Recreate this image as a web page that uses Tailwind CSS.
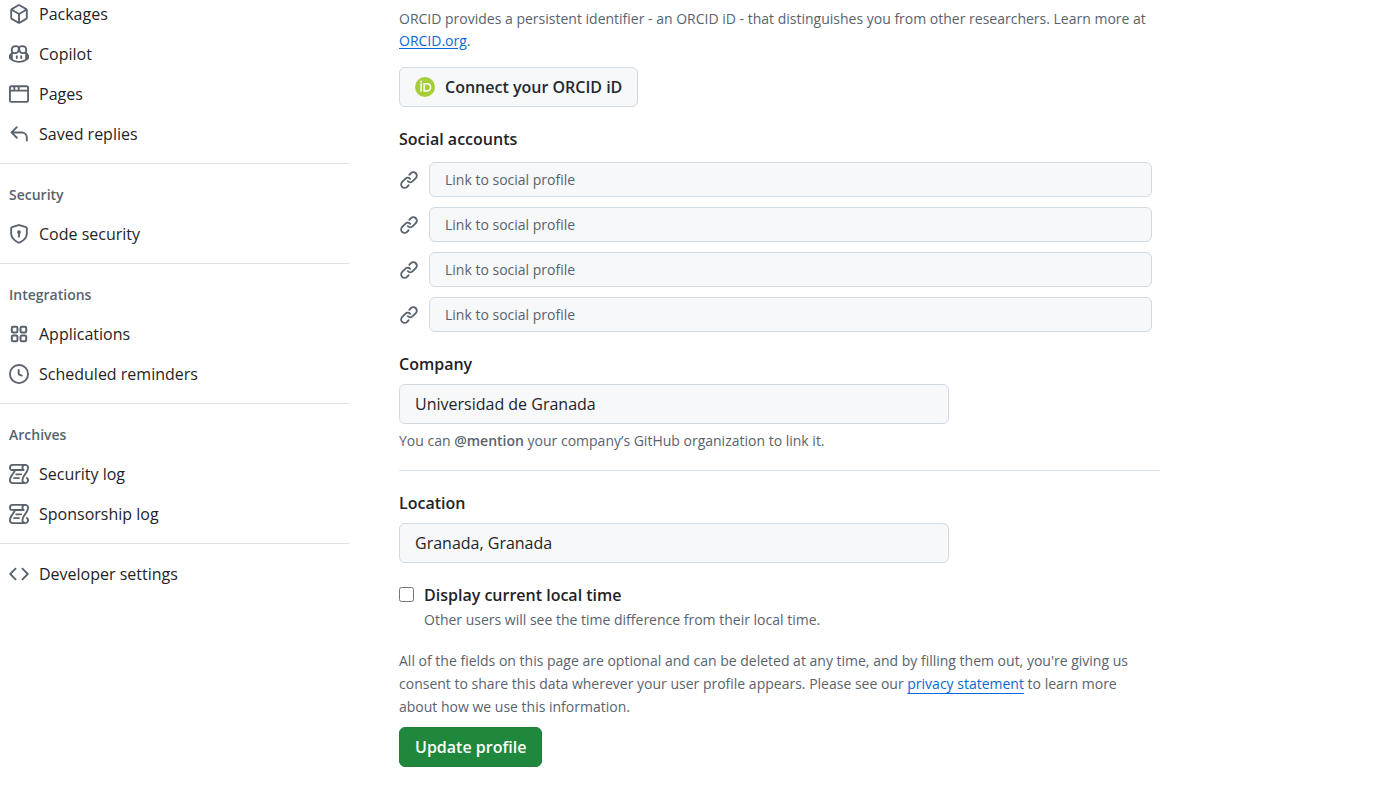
<!DOCTYPE html>
<html lang="en">
<head>
<meta charset="utf-8">
<meta name="viewport" content="width=device-width, initial-scale=1">
<title>Public profile</title>
<script src="https://cdn.jsdelivr.net/npm/@tailwindcss/browser@4"></script>
</head>
<body class="bg-white font-['Open_Sans','Noto_Sans',sans-serif] text-base text-[#1f2328]">
<svg class="hidden" aria-hidden="true">
  <symbol id="package" viewBox="0 0 16 16"><path d="m8.878.392 5.25 3.045c.54.314.872.89.872 1.514v6.098a1.75 1.75 0 0 1-.872 1.514l-5.25 3.045a1.75 1.75 0 0 1-1.756 0l-5.25-3.045A1.75 1.75 0 0 1 1 11.049V4.951c0-.624.332-1.201.872-1.514L7.122.392a1.75 1.75 0 0 1 1.756 0ZM7.875 1.69l-4.63 2.685L8 7.133l4.755-2.758-4.63-2.685a.248.248 0 0 0-.25 0ZM2.5 5.677v5.372c0 .09.047.171.125.216l4.625 2.683V8.432Zm6.25 8.271 4.625-2.683a.25.25 0 0 0 .125-.216V5.677L8.75 8.432Z"/></symbol>
  <symbol id="copilot" viewBox="0 0 16 16"><path d="M7.998 15.035c-4.562 0-7.873-2.914-7.998-3.749V9.338c.085-.628.677-1.686 1.588-2.065.013-.07.024-.143.036-.218.029-.183.06-.384.126-.612-.201-.508-.254-1.084-.254-1.656 0-.87.128-1.769.693-2.484.579-.733 1.494-1.124 2.724-1.261 1.206-.134 2.262.034 2.944.765.05.053.096.108.139.165.044-.057.094-.112.143-.165.682-.731 1.738-.899 2.944-.765 1.23.137 2.145.528 2.724 1.261.566.715.693 1.614.693 2.484 0 .572-.053 1.148-.254 1.656.066.228.098.429.126.612.012.076.024.148.037.218.924.385 1.522 1.471 1.591 2.095v1.872c0 .766-3.351 3.795-8.002 3.795Zm0-1.485c2.28 0 4.584-1.11 5.002-1.433V7.862l-.023-.116c-.49.21-1.075.291-1.727.291-1.146 0-2.059-.327-2.71-.991A3.222 3.222 0 0 1 8 6.303a3.24 3.24 0 0 1-.544.743c-.65.664-1.563.991-2.71.991-.652 0-1.236-.081-1.727-.291l-.023.116v4.255c.419.323 2.722 1.433 5.002 1.433ZM6.762 2.83c-.193-.206-.637-.413-1.682-.297-1.019.113-1.479.404-1.713.7-.247.312-.369.789-.369 1.554 0 .793.129 1.171.308 1.371.162.181.519.379 1.442.379.853 0 1.339-.235 1.638-.54.315-.322.527-.827.617-1.553.117-.935-.037-1.395-.241-1.614Zm4.155-.297c-1.044-.116-1.488.091-1.681.297-.204.219-.359.679-.242 1.614.091.726.303 1.231.618 1.553.299.305.784.54 1.638.54.922 0 1.28-.198 1.442-.379.179-.2.308-.578.308-1.371 0-.765-.123-1.242-.37-1.554-.233-.296-.693-.587-1.713-.7Z"/><path d="M6.25 9.037a.75.75 0 0 1 .75.75v1.501a.75.75 0 0 1-1.5 0V9.787a.75.75 0 0 1 .75-.75Zm4.25.75v1.501a.75.75 0 0 1-1.5 0V9.787a.75.75 0 0 1 1.5 0Z"/></symbol>
  <symbol id="browser" viewBox="0 0 16 16"><path d="M0 2.75C0 1.784.784 1 1.75 1h12.5c.966 0 1.75.784 1.75 1.75v10.5A1.75 1.75 0 0 1 14.25 15H1.75A1.75 1.75 0 0 1 0 13.25ZM14.5 6h-13v7.25c0 .138.112.25.25.25h12.5a.25.25 0 0 0 .25-.25Zm-6-3.5v2h6V2.75a.25.25 0 0 0-.25-.25ZM5 2.5v2h2v-2Zm-3.25 0a.25.25 0 0 0-.25.25V4.5h2v-2Z"/></symbol>
  <symbol id="reply" viewBox="0 0 16 16"><path d="M6.78 1.97a.75.75 0 0 1 0 1.06L3.81 6h6.44A4.75 4.75 0 0 1 15 10.75v2.5a.75.75 0 0 1-1.5 0v-2.5a3.25 3.25 0 0 0-3.25-3.25H3.81l2.97 2.97a.749.749 0 0 1-.326 1.275.749.749 0 0 1-.734-.215L1.47 7.28a.75.75 0 0 1 0-1.06l4.25-4.25a.75.75 0 0 1 1.06 0Z"/></symbol>
  <symbol id="shield" viewBox="0 0 16 16"><path d="m8.533.133 5.25 1.68A1.75 1.75 0 0 1 15 3.48V7c0 1.566-.32 3.182-1.303 4.682-.983 1.498-2.585 2.813-5.032 3.855a1.697 1.697 0 0 1-1.33 0c-2.447-1.042-4.049-2.357-5.032-3.855C1.32 10.182 1 8.566 1 7V3.48a1.75 1.75 0 0 1 1.217-1.667l5.25-1.68a1.748 1.748 0 0 1 1.066 0Zm-.61 1.429.001.001-5.25 1.68a.251.251 0 0 0-.174.237V7c0 1.36.275 2.666 1.057 3.859.784 1.194 2.121 2.342 4.366 3.298a.196.196 0 0 0 .154 0c2.245-.957 3.582-2.103 4.366-3.297C13.225 9.666 13.5 8.358 13.5 7V3.48a.25.25 0 0 0-.174-.238l-5.25-1.68a.25.25 0 0 0-.153 0ZM9.5 6.5c0 .536-.287 1.032-.75 1.3v2.45a.75.75 0 0 1-1.5 0V7.8A1.5 1.5 0 1 1 9.5 6.5Z"/></symbol>
  <symbol id="apps" viewBox="0 0 16 16"><g fill="none" stroke="currentColor" stroke-width="1.6"><rect x="2.25" y="2.25" width="4.5" height="4.5" rx="1"/><rect x="9.25" y="2.25" width="4.5" height="4.5" rx="1"/><rect x="2.25" y="9.25" width="4.5" height="4.5" rx="1"/><rect x="9.25" y="9.25" width="4.5" height="4.5" rx="1"/></g></symbol>
  <symbol id="clock" viewBox="0 0 16 16"><path d="M8 0a8 8 0 1 1 0 16A8 8 0 0 1 8 0ZM1.5 8a6.5 6.5 0 1 0 13 0 6.5 6.5 0 0 0-13 0Zm7-3.25v2.992l2.028.812a.75.75 0 0 1-.557 1.392l-2.5-1A.751.751 0 0 1 7 8.25v-3.5a.75.75 0 0 1 1.5 0Z"/></symbol>
  <symbol id="log" viewBox="0 0 16 16"><path d="M5 8.25a.75.75 0 0 1 .75-.75h4a.75.75 0 0 1 0 1.5h-4A.75.75 0 0 1 5 8.25ZM4 10.5A.75.75 0 0 0 4 12h4a.75.75 0 0 0 0-1.5H4Z"/><path d="M13-.005c1.654 0 3 1.328 3 3 0 .982-.338 1.933-.783 2.818-.443.879-1.028 1.758-1.582 2.588l-.011.017c-.568.853-1.104 1.659-1.501 2.446-.398.789-.623 1.494-.623 2.136a1.5 1.5 0 1 0 2.333-1.248.75.75 0 0 1 .834-1.246A3 3 0 0 1 13 16H3a3 3 0 0 1-3-3c0-1.582.891-3.135 1.777-4.506.209-.322.418-.637.623-.946.473-.709.923-1.386 1.287-2.048H2.51c-.576 0-1.381-.133-1.907-.783A2.68 2.68 0 0 1 0 2.995a3 3 0 0 1 3-3Zm0 1.5a1.5 1.5 0 0 0-1.5 1.5c0 .476.223.834.667 1.132A.75.75 0 0 1 11.75 5.5H5.368c-.467 1.003-1.141 2.015-1.773 2.963-.192.289-.381.571-.558.845C2.13 10.711 1.5 11.916 1.5 13A1.5 1.5 0 0 0 3 14.5h7.401A2.989 2.989 0 0 1 10 13c0-.979.338-1.928.784-2.812.441-.874 1.023-1.748 1.575-2.576l.017-.026c.568-.853 1.103-1.658 1.501-2.448.398-.79.623-1.497.623-2.143 0-.838-.669-1.5-1.5-1.5Zm-10 0a1.5 1.5 0 0 0-1.5 1.5c0 .321.1.569.27.778.097.12.325.227.74.227h7.674A2.737 2.737 0 0 1 10 2.995c0-.546.146-1.059.401-1.5Z"/></symbol>
  <symbol id="code" viewBox="0 0 16 16"><path d="m11.28 3.22 4.25 4.25a.75.75 0 0 1 0 1.06l-4.25 4.25a.749.749 0 0 1-1.275-.326.749.749 0 0 1 .215-.734L13.94 8l-3.72-3.72a.749.749 0 0 1 .326-1.275.749.749 0 0 1 .734.215Zm-6.56 0a.751.751 0 0 1 1.042.018.751.751 0 0 1 .018 1.042L2.06 8l3.72 3.72a.749.749 0 0 1-.326 1.275.749.749 0 0 1-.734-.215L.47 8.53a.75.75 0 0 1 0-1.06Z"/></symbol>
  <symbol id="link" viewBox="0 0 16 16"><path d="m7.775 3.275 1.25-1.25a3.5 3.5 0 1 1 4.95 4.95l-2.5 2.5a3.5 3.5 0 0 1-4.95 0 .751.751 0 0 1 .018-1.042.751.751 0 0 1 1.042-.018 1.998 1.998 0 0 0 2.83 0l2.5-2.5a2.002 2.002 0 0 0-2.83-2.83l-1.25 1.25a.751.751 0 0 1-1.042-.018.751.751 0 0 1-.018-1.042Zm-4.69 9.64a1.998 1.998 0 0 0 2.83 0l1.25-1.25a.751.751 0 0 1 1.042.018.751.751 0 0 1 .018 1.042l-1.25 1.25a3.5 3.5 0 1 1-4.95-4.95l2.5-2.5a3.5 3.5 0 0 1 4.95 0 .751.751 0 0 1-.018 1.042.751.751 0 0 1-1.042.018 1.998 1.998 0 0 0-2.83 0l-2.5 2.5a1.998 1.998 0 0 0 0 2.83Z"/></symbol>
</svg>
<div class="flex items-start gap-[50px]">
  <nav aria-label="Settings" class="-mt-1.5 w-1/4 max-w-[349px] shrink-0">
    <ul>
      <li><a href="#" class="flex h-10 items-center gap-2.5 pl-[9px]"><svg class="size-5 fill-current text-[#59636e]"><use href="#package"/></svg>Packages</a></li>
      <li><a href="#" class="flex h-10 items-center gap-2.5 pl-[9px]"><svg class="size-5 fill-current text-[#59636e]"><use href="#copilot"/></svg>Copilot</a></li>
      <li><a href="#" class="flex h-10 items-center gap-2.5 pl-[9px]"><svg class="size-5 fill-current text-[#59636e]"><use href="#browser"/></svg>Pages</a></li>
      <li><a href="#" class="flex h-10 items-center gap-2.5 pl-[9px]"><svg class="size-5 fill-current text-[#59636e]"><use href="#reply"/></svg>Saved replies</a></li>
    </ul>
    <hr class="mt-[9px] border-[#dfe2e5]">
    <h3 class="flex h-[50px] items-center pt-3 pl-[9px] text-sm font-semibold text-[#59636e]">Security</h3>
    <ul>
      <li><a href="#" class="flex h-10 items-center gap-2.5 pl-[9px]"><svg class="size-5 fill-current text-[#59636e]"><use href="#shield"/></svg>Code security</a></li>
    </ul>
    <hr class="mt-[9px] border-[#dfe2e5]">
    <h3 class="flex h-[50px] items-center pt-3 pl-[9px] text-sm font-semibold text-[#59636e]">Integrations</h3>
    <ul>
      <li><a href="#" class="flex h-10 items-center gap-2.5 pl-[9px]"><svg class="size-5 fill-current text-[#59636e]"><use href="#apps"/></svg>Applications</a></li>
      <li><a href="#" class="flex h-10 items-center gap-2.5 pl-[9px]"><svg class="size-5 fill-current text-[#59636e]"><use href="#clock"/></svg>Scheduled reminders</a></li>
    </ul>
    <hr class="mt-[9px] border-[#dfe2e5]">
    <h3 class="flex h-[50px] items-center pt-3 pl-[9px] text-sm font-semibold text-[#59636e]">Archives</h3>
    <ul>
      <li><a href="#" class="flex h-10 items-center gap-2.5 pl-[9px]"><svg class="size-5 fill-current text-[#59636e]"><use href="#log"/></svg>Security log</a></li>
      <li><a href="#" class="flex h-10 items-center gap-2.5 pl-[9px]"><svg class="size-5 fill-current text-[#59636e]"><use href="#log"/></svg>Sponsorship log</a></li>
    </ul>
    <hr class="mt-[9px] mb-2.5 border-[#dfe2e5]">
    <a href="#" class="flex h-10 items-center gap-2.5 pl-[9px]"><svg class="size-5 fill-current text-[#59636e]"><use href="#code"/></svg>Developer settings</a>
  </nav>

  <main class="min-w-0 max-w-[761px] flex-1 pt-2">
    <form>
      <p class="text-sm leading-[22px] text-[#59636e]">ORCID provides a persistent identifier - an ORCID iD - that distinguishes you from other researchers. Learn more at <a href="#" class="text-[#0969da] underline underline-offset-2">ORCID.org</a>.</p>
      <button type="button" class="mt-[15px] flex h-10 items-center gap-2.5 rounded-md border border-[#d1d9e0] bg-[#f6f8fa] px-[15px] font-semibold text-[#25292e]">
        <svg class="size-5" viewBox="0 0 256 256" aria-hidden="true"><circle cx="128" cy="128" r="128" fill="#a6ce39"/><rect x="69" y="79" width="19" height="107" fill="#fff"/><circle cx="78.6" cy="56.8" r="12" fill="#fff"/><path d="M116.6 86.1h33.9c33 0 49.1 23.6 49.1 46.6 0 24-17.5 46.7-48.9 46.7h-34.1Z" fill="none" stroke="#fff" stroke-width="18"/></svg>
        Connect your ORCID iD
      </button>

      <fieldset class="mt-5">
        <legend class="leading-6 font-semibold">Social accounts</legend>
        <div class="mt-[11px] flex flex-col gap-2.5 pr-2">
          <label class="flex items-center gap-2.5"><svg class="size-5 shrink-0 fill-[#59636e]" role="img" aria-label="Social profile 1"><use href="#link"/></svg><input type="url" placeholder="Link to social profile" class="h-[35px] min-w-0 flex-1 rounded-md border border-[#d1d9e0] bg-[#f6f8fa] px-[15px] text-sm placeholder:text-[#59636e]"></label>
          <label class="flex items-center gap-2.5"><svg class="size-5 shrink-0 fill-[#59636e]" role="img" aria-label="Social profile 2"><use href="#link"/></svg><input type="url" placeholder="Link to social profile" class="h-[35px] min-w-0 flex-1 rounded-md border border-[#d1d9e0] bg-[#f6f8fa] px-[15px] text-sm placeholder:text-[#59636e]"></label>
          <label class="flex items-center gap-2.5"><svg class="size-5 shrink-0 fill-[#59636e]" role="img" aria-label="Social profile 3"><use href="#link"/></svg><input type="url" placeholder="Link to social profile" class="h-[35px] min-w-0 flex-1 rounded-md border border-[#d1d9e0] bg-[#f6f8fa] px-[15px] text-sm placeholder:text-[#59636e]"></label>
          <label class="flex items-center gap-2.5"><svg class="size-5 shrink-0 fill-[#59636e]" role="img" aria-label="Social profile 4"><use href="#link"/></svg><input type="url" placeholder="Link to social profile" class="h-[35px] min-w-0 flex-1 rounded-md border border-[#d1d9e0] bg-[#f6f8fa] px-[15px] text-sm placeholder:text-[#59636e]"></label>
        </div>
      </fieldset>

      <label for="company" class="mt-5 block leading-6 font-semibold">Company</label>
      <input id="company" type="text" value="Universidad de Granada" class="mt-2 block h-10 w-full max-w-[550px] rounded-md border border-[#d1d9e0] bg-[#f6f8fa] px-[15px]">
      <p class="mt-1.5 text-sm leading-[22px] text-[#59636e]">You can <span class="font-semibold">@mention</span> your company’s GitHub organization to link it.</p>
      <hr class="mt-[18px] border-[#d9e0e6]">

      <label for="location" class="mt-5 block leading-6 font-semibold">Location</label>
      <input id="location" type="text" value="Granada, Granada" class="mt-2 block h-10 w-full max-w-[550px] rounded-md border border-[#d1d9e0] bg-[#f6f8fa] px-[15px]">

      <div class="mt-5 flex items-start gap-2.5">
        <input id="local-time" type="checkbox" aria-describedby="local-time-note" class="mt-1 size-[15px] shrink-0">
        <div>
          <label for="local-time" class="block leading-6 font-semibold">Display current local time</label>
          <p id="local-time-note" class="mt-0.5 text-sm leading-[22px] text-[#59636e]">Other users will see the time difference from their local time.</p>
        </div>
      </div>

      <p class="mt-[18px] pr-2 text-sm leading-[23px] text-[#59636e]">All of the fields on this page are optional and can be deleted at any time, and by filling them out, you're giving us consent to share this data wherever your user profile appears. Please see our <a href="#" class="text-[#0969da] underline underline-offset-4">privacy statement</a> to learn more about how we use this information.</p>
      <button type="submit" class="mt-[9px] h-10 rounded-md border border-[#1f7f3a] bg-[#1f883d] px-[15px] font-semibold text-white">Update profile</button>
    </form>
  </main>
</div>
</body>
</html>
